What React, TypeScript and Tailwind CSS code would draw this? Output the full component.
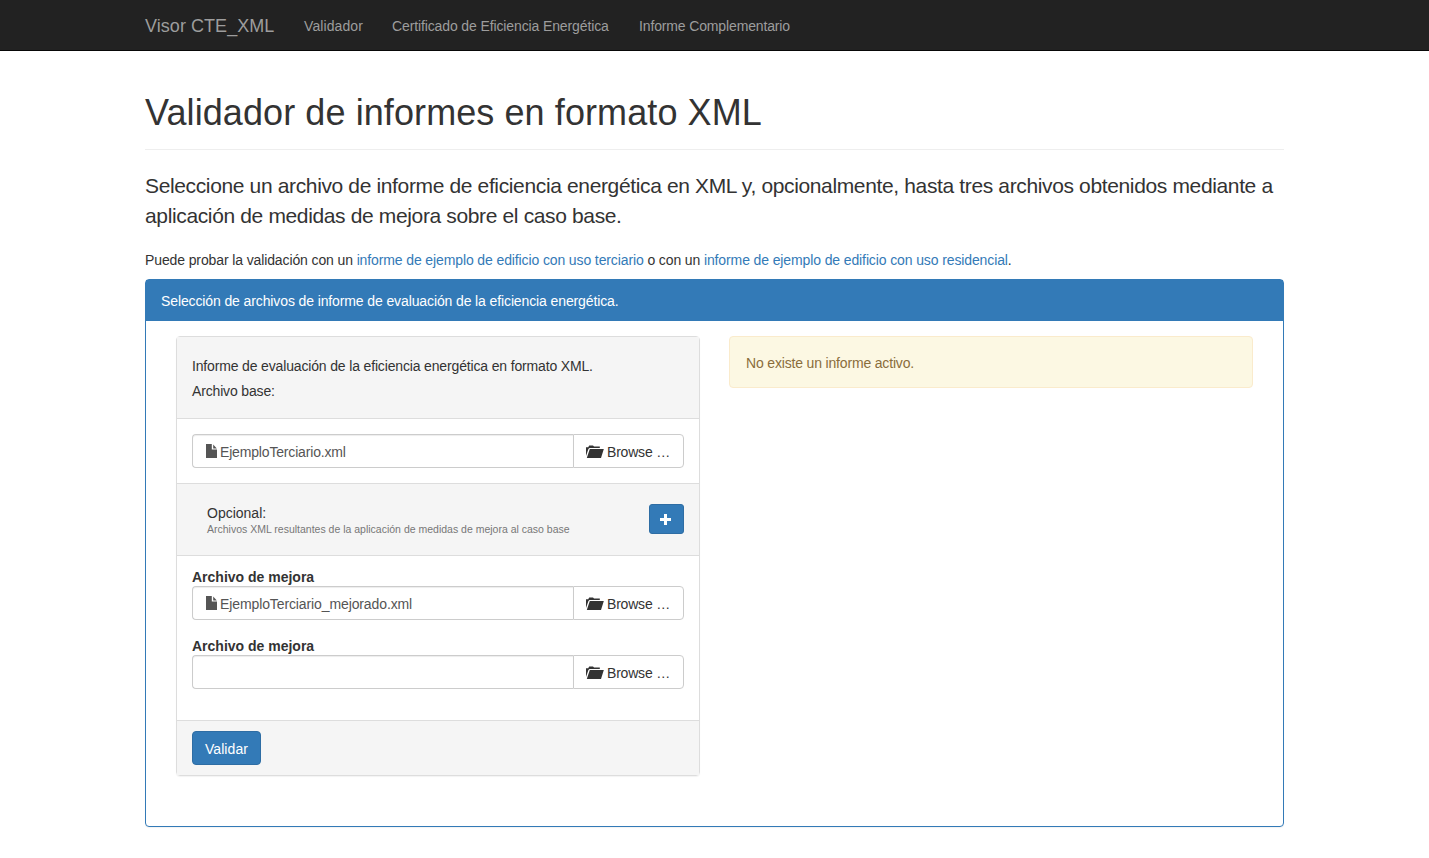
import type { ReactNode } from "react";

function FileIcon() {
  return (
    <svg className="mr-[3px] mb-[2px] h-[14px] w-[11px] shrink-0 fill-[#555]" viewBox="0 0 11 14">
      <path d="M0 0h5.8v5.5h5.2V14H0zM7.200 .6L10.800 4.400H7.200z" />
    </svg>
  );
}

function FolderOpenIcon() {
  return (
    <svg className="mr-[4px] mb-px h-[13px] w-[18px] shrink-0 fill-[#333]" viewBox="0 0 18 13">
      <path d="M0 11V2.200h2.200L3.200.5h3.800L8 1.500h5.800V3H3.500L2.400 4z" />
      <path d="M3.800 4H17.800L15 13H.8z" />
    </svg>
  );
}

function FileInput({ name, nameClass = "" }: { name?: string; nameClass?: string }) {
  return (
    <div className="flex h-[34px]">
      <div className="flex h-full w-[381px] items-center rounded-l border border-r-0 border-[#ccc] bg-white pt-[2px] pl-[13px] text-[#555] shadow-[inset_0_1px_1px_rgba(0,0,0,0.075)]">
        {name && (
          <>
            <FileIcon />
            <span className={nameClass}>{name}</span>
          </>
        )}
      </div>
      <button className="flex h-full flex-1 items-center rounded-r border border-[#ccc] bg-white pt-[2px] pl-[12px] tracking-[-0.2px]">
        <FolderOpenIcon />
        <span className="-ml-px">Browse …</span>
      </button>
    </div>
  );
}

function Link({ children }: { children: ReactNode }) {
  return <a className="text-[#337ab7]" href="#">{children}</a>;
}

export default function App() {
  return (
    <div className="min-h-[858px] bg-white font-['Liberation_Sans',Arial,sans-serif] text-[14px] leading-[20px] text-[#333]">
      <nav className="h-[51px] border-b border-[#080808] bg-[#222] text-[#9d9d9d]">
        <div className="mx-auto flex h-[50px] w-[1139px] items-center pt-[2px]">
          <a className="w-[159px] text-[18px] tracking-[0.05px]" href="#">Visor CTE_XML</a>
          <a className="w-[88px] tracking-[0.1px]" href="#">Validador</a>
          <a className="w-[247px] tracking-[-0.12px]" href="#">Certificado de Eficiencia Energética</a>
          <a className="tracking-[-0.14px]" href="#">Informe Complementario</a>
        </div>
      </nav>
      <main className="mx-auto w-[1139px] whitespace-nowrap">
        <header className="mb-[20px] h-[99px] border-b border-[#eee] pt-[42px]">
          <h1 className="text-[36px] leading-[39.6px] tracking-[0.09px]">Validador de informes en formato XML</h1>
        </header>
        <p className="mb-[19px] pt-[1px] text-[21px] leading-[30px] tracking-[-0.36px]">
          Seleccione un archivo de informe de eficiencia energética en XML y, opcionalmente, hasta tres archivos obtenidos mediante a<br />
          aplicación de medidas de mejora sobre el caso base.
        </p>
        <p className="mb-[9px] tracking-[-0.117px]">
          Puede probar la validación con un <Link>informe de ejemplo de edificio con uso terciario</Link> o con un{" "}
          <Link>informe de ejemplo de edificio con uso residencial</Link>.
        </p>
        <section className="h-[548px] rounded border border-[#337ab7] shadow-[0_1px_1px_rgba(0,0,0,0.05)]">
          <h2 className="h-[41px] bg-[#337ab7] px-[15px] pt-[11px] tracking-[-0.115px] text-white">
            Selección de archivos de informe de evaluación de la eficiencia energética.
          </h2>
          <div className="grid grid-cols-[524px_524px] items-start gap-[29px] px-[30px] pt-[15px]">
            <form className="rounded border border-[#ddd] shadow-[0_1px_1px_rgba(0,0,0,0.05)]">
              <div className="h-[82px] border-b border-[#ddd] bg-[#f5f5f5] px-[15px] pt-[19px] tracking-[-0.155px]">
                <p className="mb-[5px]">Informe de evaluación de la eficiencia energética en formato XML.</p>
                <p>Archivo base:</p>
              </div>
              <div className="h-[64px] px-[15px] pt-[15px]">
                <FileInput name="EjemploTerciario.xml" nameClass="tracking-[-0.17px]" />
              </div>
              <div className="flex h-[73px] items-center justify-between border-y border-[#ddd] bg-[#f5f5f5] pr-[15px] pl-[30px]">
                <div>
                  <p>Opcional:</p>
                  <p className="text-[10.5px] leading-[13px] text-[#777]">
                    Archivos XML resultantes de la aplicación de medidas de mejora al caso base
                  </p>
                </div>
                <button className="mb-px flex h-[30px] w-[35px] items-center justify-center rounded-[3px] border border-[#2e6da4] bg-[#337ab7]">
                  <svg className="mr-[2px] h-[11px] w-[11px] fill-white" viewBox="0 0 11 11">
                    <path d="M4 0h3v4h4v3H7v4H4V7H0V4h4z" />
                  </svg>
                </button>
              </div>
              <div className="h-[164px] px-[15px] pt-[11px]">
                <p className="h-[19px] font-bold">Archivo de mejora</p>
                <FileInput name="EjemploTerciario_mejorado.xml" nameClass="tracking-[-0.11px]" />
                <p className="mt-[16px] h-[19px] font-bold">Archivo de mejora</p>
                <FileInput />
              </div>
              <div className="h-[55px] border-t border-[#ddd] bg-[#f5f5f5] px-[15px] pt-[10px]">
                <button className="h-[34px] w-[69px] rounded border border-[#2e6da4] bg-[#337ab7] pt-[2px] tracking-[0.1px] text-white">Validar</button>
              </div>
            </form>
            <div className="h-[52px] rounded border border-[#faebcc] bg-[#fcf8e3] px-[16px] pt-[16px] tracking-[-0.17px] text-[#8a6d3b]">
              No existe un informe activo.
            </div>
          </div>
        </section>
      </main>
    </div>
  );
}
